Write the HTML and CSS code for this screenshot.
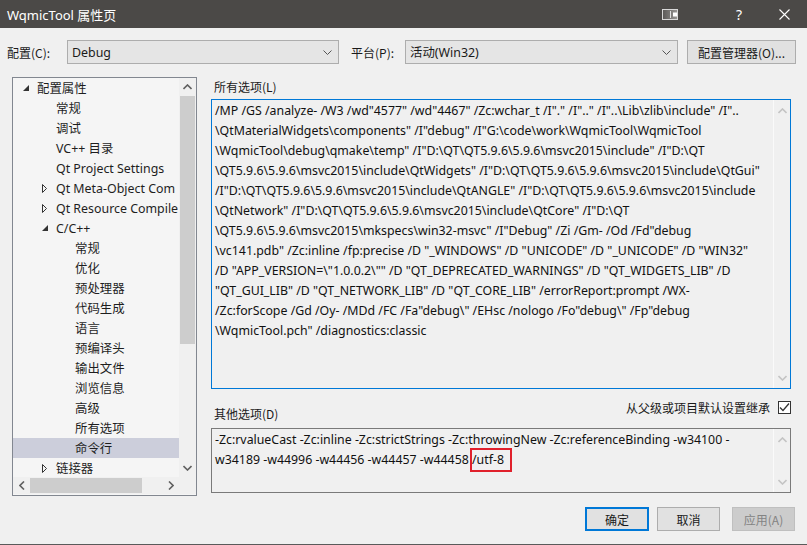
FILE: index.html
```html
<!DOCTYPE html>
<html lang="zh-CN">
<head>
<meta charset="utf-8">
<title>WqmicTool 属性页</title>
<link rel="stylesheet" href="styles.css">
</head>
<body>
<div class="window">
  <div class="titlebar">
    <span class="title">WqmicTool 属性页</span>
    <div class="tb-icons">
      <svg class="tb-icon" width="16" height="11" viewBox="0 0 16 11">
        <defs><linearGradient id="g1" x1="0" x2="1" y1="0" y2="0"><stop offset="0" stop-color="#5a5856"/><stop offset="1" stop-color="#9a9896"/></linearGradient></defs>
        <rect x="0.5" y="0.5" width="15" height="10" fill="url(#g1)" stroke="#d8d8d8"/>
        <rect x="11" y="3.5" width="4" height="4" fill="#ffffff"/>
        <rect x="8" y="2" width="1" height="7" fill="#e0e0e0"/>
      </svg>
      <span class="tb-help">?</span>
      <svg class="tb-close" width="11" height="11" viewBox="0 0 11 11"><path d="M0.5 0.5 L10.5 10.5 M10.5 0.5 L0.5 10.5" stroke="#ffffff" stroke-width="1.1"/></svg>
    </div>
  </div>

  <div class="config-row">
    <span class="cfg-label">配置(C):</span>
    <div class="combo combo-cfg"><span>Debug</span><svg class="chev" width="9" height="5" viewBox="0 0 9 5"><path d="M0.5 0.5 L4.5 4.5 L8.5 0.5" fill="none" stroke="#555" stroke-width="1"/></svg></div>
    <span class="cfg-label plat">平台(P):</span>
    <div class="combo combo-plat"><span>活动(Win32)</span><svg class="chev" width="9" height="5" viewBox="0 0 9 5"><path d="M0.5 0.5 L4.5 4.5 L8.5 0.5" fill="none" stroke="#555" stroke-width="1"/></svg></div>
    <button class="btn mgr">配置管理器(O)...</button>
  </div>

  <div class="content">
    <div class="tree">
      <div class="tree-top">
        <div class="tree-view">
          <div class="row l0"><span class="tw"><svg width="6" height="6" viewBox="0 0 6 6"><path d="M6 0 L6 6 L0 6 Z" fill="#333"/></svg></span>配置属性</div>
          <div class="row l1"><span class="tw"></span>常规</div>
          <div class="row l1"><span class="tw"></span>调试</div>
          <div class="row l1"><span class="tw"></span>VC++ 目录</div>
          <div class="row l1"><span class="tw"></span>Qt Project Settings</div>
          <div class="row l1 col"><span class="tw"><svg width="5" height="9" viewBox="0 0 5 9"><path d="M0.5 0.5 L4.5 4.5 L0.5 8.5 Z" fill="none" stroke="#333"/></svg></span><span class="clip">Qt Meta-Object Com</span></div>
          <div class="row l1 col"><span class="tw"><svg width="5" height="9" viewBox="0 0 5 9"><path d="M0.5 0.5 L4.5 4.5 L0.5 8.5 Z" fill="none" stroke="#333"/></svg></span><span class="clip">Qt Resource Compile</span></div>
          <div class="row l1"><span class="tw"><svg width="6" height="6" viewBox="0 0 6 6"><path d="M6 0 L6 6 L0 6 Z" fill="#333"/></svg></span>C/C++</div>
          <div class="row l2"><span class="tw"></span>常规</div>
          <div class="row l2"><span class="tw"></span>优化</div>
          <div class="row l2"><span class="tw"></span>预处理器</div>
          <div class="row l2"><span class="tw"></span>代码生成</div>
          <div class="row l2"><span class="tw"></span>语言</div>
          <div class="row l2"><span class="tw"></span>预编译头</div>
          <div class="row l2"><span class="tw"></span>输出文件</div>
          <div class="row l2"><span class="tw"></span>浏览信息</div>
          <div class="row l2"><span class="tw"></span>高级</div>
          <div class="row l2"><span class="tw"></span>所有选项</div>
          <div class="row l2 sel"><span class="tw"></span>命令行</div>
          <div class="row l1"><span class="tw"><svg width="5" height="9" viewBox="0 0 5 9"><path d="M0.5 0.5 L4.5 4.5 L0.5 8.5 Z" fill="none" stroke="#333"/></svg></span>链接器</div>
        </div>
        <div class="vscroll">
          <svg class="arr" width="9" height="6" viewBox="0 0 9 6"><path d="M0.5 5 L4.5 1 L8.5 5" fill="none" stroke="#606060" stroke-width="1.6"/></svg>
          <div class="thumb-v"></div>
          <div class="vfill"></div>
          <svg class="arr" width="9" height="6" viewBox="0 0 9 6"><path d="M0.5 1 L4.5 5 L8.5 1" fill="none" stroke="#606060" stroke-width="1.6"/></svg>
        </div>
      </div>
      <div class="hscroll">
        <svg class="harr" width="6" height="9" viewBox="0 0 6 9"><path d="M5 0.5 L1 4.5 L5 8.5" fill="none" stroke="#606060" stroke-width="1.6"/></svg>
        <div class="thumb-h"></div>
        <div class="hfill"></div>
        <svg class="harr" width="6" height="9" viewBox="0 0 6 9"><path d="M1 0.5 L5 4.5 L1 8.5" fill="none" stroke="#606060" stroke-width="1.6"/></svg>
        <div class="corner"></div>
      </div>
    </div>

    <div class="panel">
      <div class="lbl-all">所有选项(L)</div>
      <div class="textbox tb1">
        <div class="tb-text">
          <div>/MP /GS /analyze- /W3 /wd"4577" /wd"4467" /Zc:wchar_t /I"." /I".." /I"..\Lib\zlib\include" /I"..</div>
          <div>\QtMaterialWidgets\components" /I"debug" /I"G:\code\work\WqmicTool\WqmicTool</div>
          <div>\WqmicTool\debug\qmake\temp" /I"D:\QT\QT5.9.6\5.9.6\msvc2015\include" /I"D:\QT</div>
          <div>\QT5.9.6\5.9.6\msvc2015\include\QtWidgets" /I"D:\QT\QT5.9.6\5.9.6\msvc2015\include\QtGui"</div>
          <div>/I"D:\QT\QT5.9.6\5.9.6\msvc2015\include\QtANGLE" /I"D:\QT\QT5.9.6\5.9.6\msvc2015\include</div>
          <div>\QtNetwork" /I"D:\QT\QT5.9.6\5.9.6\msvc2015\include\QtCore" /I"D:\QT</div>
          <div>\QT5.9.6\5.9.6\msvc2015\mkspecs\win32-msvc" /I"Debug" /Zi /Gm- /Od /Fd"debug</div>
          <div>\vc141.pdb" /Zc:inline /fp:precise /D "_WINDOWS" /D "UNICODE" /D "_UNICODE" /D "WIN32"</div>
          <div>/D "APP_VERSION=\"1.0.0.2\"" /D "QT_DEPRECATED_WARNINGS" /D "QT_WIDGETS_LIB" /D</div>
          <div>"QT_GUI_LIB" /D "QT_NETWORK_LIB" /D "QT_CORE_LIB" /errorReport:prompt /WX-</div>
          <div>/Zc:forScope /Gd /Oy- /MDd /FC /Fa"debug\" /EHsc /nologo /Fo"debug\" /Fp"debug</div>
          <div>\WqmicTool.pch" /diagnostics:classic</div>
        </div>
        <div class="tb-scroll">
          <svg width="9" height="6" viewBox="0 0 9 6"><path d="M0.5 5 L4.5 1 L8.5 5" fill="none" stroke="#c4c4c4" stroke-width="1.6"/></svg>
          <svg width="9" height="6" viewBox="0 0 9 6"><path d="M0.5 1 L4.5 5 L8.5 1" fill="none" stroke="#c4c4c4" stroke-width="1.6"/></svg>
        </div>
      </div>
      <div class="opts-head">
        <span class="lbl-other">其他选项(D)</span>
        <label class="inherit">从父级或项目默认设置继承<span class="check"><svg width="11" height="11" viewBox="0 0 11 11"><path d="M1 5.5 L4 8.5 L10 1.5" fill="none" stroke="#333" stroke-width="1.3"/></svg></span></label>
      </div>
      <div class="textbox tb2">
        <div class="tb-text">
          <div>-Zc:rvalueCast -Zc:inline -Zc:strictStrings -Zc:throwingNew -Zc:referenceBinding -w34100 -</div>
          <div>w34189 -w44996 -w44456 -w44457 -w44458 <span class="mark">/utf-8</span></div>
        </div>
        <div class="tb-scroll">
          <svg width="9" height="6" viewBox="0 0 9 6"><path d="M0.5 5 L4.5 1 L8.5 5" fill="none" stroke="#c4c4c4" stroke-width="1.6"/></svg>
          <svg width="9" height="6" viewBox="0 0 9 6"><path d="M0.5 1 L4.5 5 L8.5 1" fill="none" stroke="#c4c4c4" stroke-width="1.6"/></svg>
        </div>
      </div>
    </div>
  </div>

  <div class="buttons">
    <button class="btn ok">确定</button>
    <button class="btn cancel">取消</button>
    <button class="btn apply" disabled>应用(A)</button>
  </div>
</div>
</body>
</html>
```

FILE: styles.css
```css
* { box-sizing: border-box; }
html, body { margin: 0; padding: 0; }
body {
  width: 807px;
  height: 545px;
  overflow: hidden;
  font-family: "Segoe UI", "Noto Sans", "Noto Sans CJK SC", sans-serif;
  font-size: 12px;
  color: #1a1a1a;
}
.window {
  width: 807px;
  height: 545px;
  background: #f0f0f0;
  border-bottom: 1px solid #5a5a5a;
  display: flex;
  flex-direction: column;
}
.titlebar {
  height: 28px;
  flex: none;
  background: #4b4947;
  color: #fff;
  display: flex;
  align-items: center;
  padding-left: 7px;
}
.title {
  font-size: 13px;
  font-family: "Noto Sans", "Noto Sans CJK SC", sans-serif;
}
.tb-icons {
  margin-left: auto;
  display: flex;
  align-items: center;
  height: 28px;
}
.tb-icon { margin-right: 58px; }
.tb-help { font-size: 14px; margin-right: 37px; color: #fff; font-family: "Noto Sans", sans-serif; }
.tb-close { margin-right: 17px; }

.config-row {
  display: flex;
  align-items: center;
  height: 24px;
  margin-top: 12px;
  padding-left: 7px;
}
.cfg-label {
  width: 60px;
  font-family: "Noto Sans CJK SC", sans-serif;
  font-size: 12px;
}
.cfg-label.plat { width: 54px; margin-left: 12px; }
.combo {
  height: 24px;
  background: #e5e5e5;
  border: 1px solid #adadad;
  display: flex;
  align-items: center;
  padding-left: 4px;
  padding-right: 6px;
  font-family: "Noto Sans", "Noto Sans CJK SC", sans-serif;
  font-size: 12.4px;
}
.combo .chev { margin-left: auto; }
.combo-cfg { width: 272px; }
.combo-plat { width: 273px; }
.btn {
  font-family: "Noto Sans CJK SC", sans-serif;
  font-size: 12px;
  height: 24px;
  background: #e1e1e1;
  border: 1px solid #adadad;
  color: #1a1a1a;
  padding: 0;
  display: flex;
  align-items: center;
  justify-content: center;
}
.mgr { width: 109px; margin-left: 9px; }

.content {
  display: flex;
  margin-top: 13px;
  padding-left: 12px;
}
.tree {
  width: 185px;
  height: 419px;
  border: 1px solid #828790;
  background: #f5f5f5;
  display: flex;
  flex-direction: column;
}
.tree-top { display: flex; height: 399px; }
.tree-view {
  width: 166px;
  overflow: hidden;
  font-family: "Noto Sans", "Noto Sans CJK SC", sans-serif;
  font-size: 12.4px;
}
.row {
  height: 20px;
  display: flex;
  align-items: center;
  white-space: nowrap;
  color: #1e1e1e;
}
.clip { overflow: hidden; }
.row.l0 { padding-left: 10px; }
.row.l1 { padding-left: 29px; }
.row.l2 { padding-left: 48px; }
.row.sel { background: #cccedb; }
.tw {
  width: 14px;
  flex: none;
  display: flex;
  align-items: center;
}
.vscroll {
  width: 17px;
  background: #f0f0f0;
  display: flex;
  flex-direction: column;
  align-items: center;
}
.vscroll .arr { margin: 6px 0 6px; flex: none; }
.thumb-v { width: 15px; height: 248px; background: #cdcdcd; flex: none; }
.vfill { flex: 1; }
.hscroll {
  height: 17px;
  display: flex;
  align-items: center;
  background: #f0f0f0;
}
.harr { margin: 0 5px; flex: none; }
.harr:first-child { margin-left: 6px; margin-right: 5px; }
.thumb-h { width: 112px; height: 15px; background: #cdcdcd; }
.hfill { flex: 1; }
.corner { width: 17px; height: 17px; background: #f0f0f0; }

.panel {
  margin-left: 14px;
  width: 580px;
  display: flex;
  flex-direction: column;
}
.lbl-all, .lbl-other, .inherit {
  font-family: "Noto Sans CJK SC", sans-serif;
  font-size: 12px;
}
.lbl-all { height: 22px; padding-left: 3px; line-height: 20px; }
.textbox {
  display: flex;
  background: #f0f0f0;
}
.tb1 { height: 290px; border: 1px solid #0078d7; }
.tb2 { height: 65px; border: 1px solid #7a7a7a; }
.tb-text {
  flex: 1;
  padding: 1px 0 0 3px;
  font-family: "Noto Sans", sans-serif;
  font-size: 12.35px;
  line-height: 20px;
  white-space: nowrap;
  overflow: hidden;
  color: #111;
}
.tb-scroll {
  width: 17px;
  flex: none;
  border-left: 1px solid #fafafa;
  display: flex;
  flex-direction: column;
  justify-content: space-between;
  align-items: center;
  padding: 8px 0 7px;
}
.opts-head {
  height: 39px;
  display: flex;
  justify-content: space-between;
  align-items: flex-start;
}
.lbl-other { margin-top: 16px; padding-left: 3px; }
.inherit {
  display: flex;
  align-items: center;
  margin-top: 10px;
}
.check {
  width: 13px;
  height: 13px;
  border: 1px solid #333;
  background: #fff;
  margin-left: 8px;
  display: flex;
  align-items: center;
  justify-content: center;
}
.mark {
  display: inline-block;
  border: 2px solid #e0202b;
  line-height: 20px;
  margin: -2px 0 -2px -2px;
  padding: 0 6px 0 0;
}

.buttons {
  display: flex;
  justify-content: flex-end;
  margin-top: 11px;
  padding-right: 12px;
}
.ok { width: 64px; border: 2px solid #0078d7; }
.cancel { width: 63px; margin-left: 8px; }
.apply { width: 63px; margin-left: 12px; background: #cccccc; border-color: #bfbfbf; color: #838383; }
```
